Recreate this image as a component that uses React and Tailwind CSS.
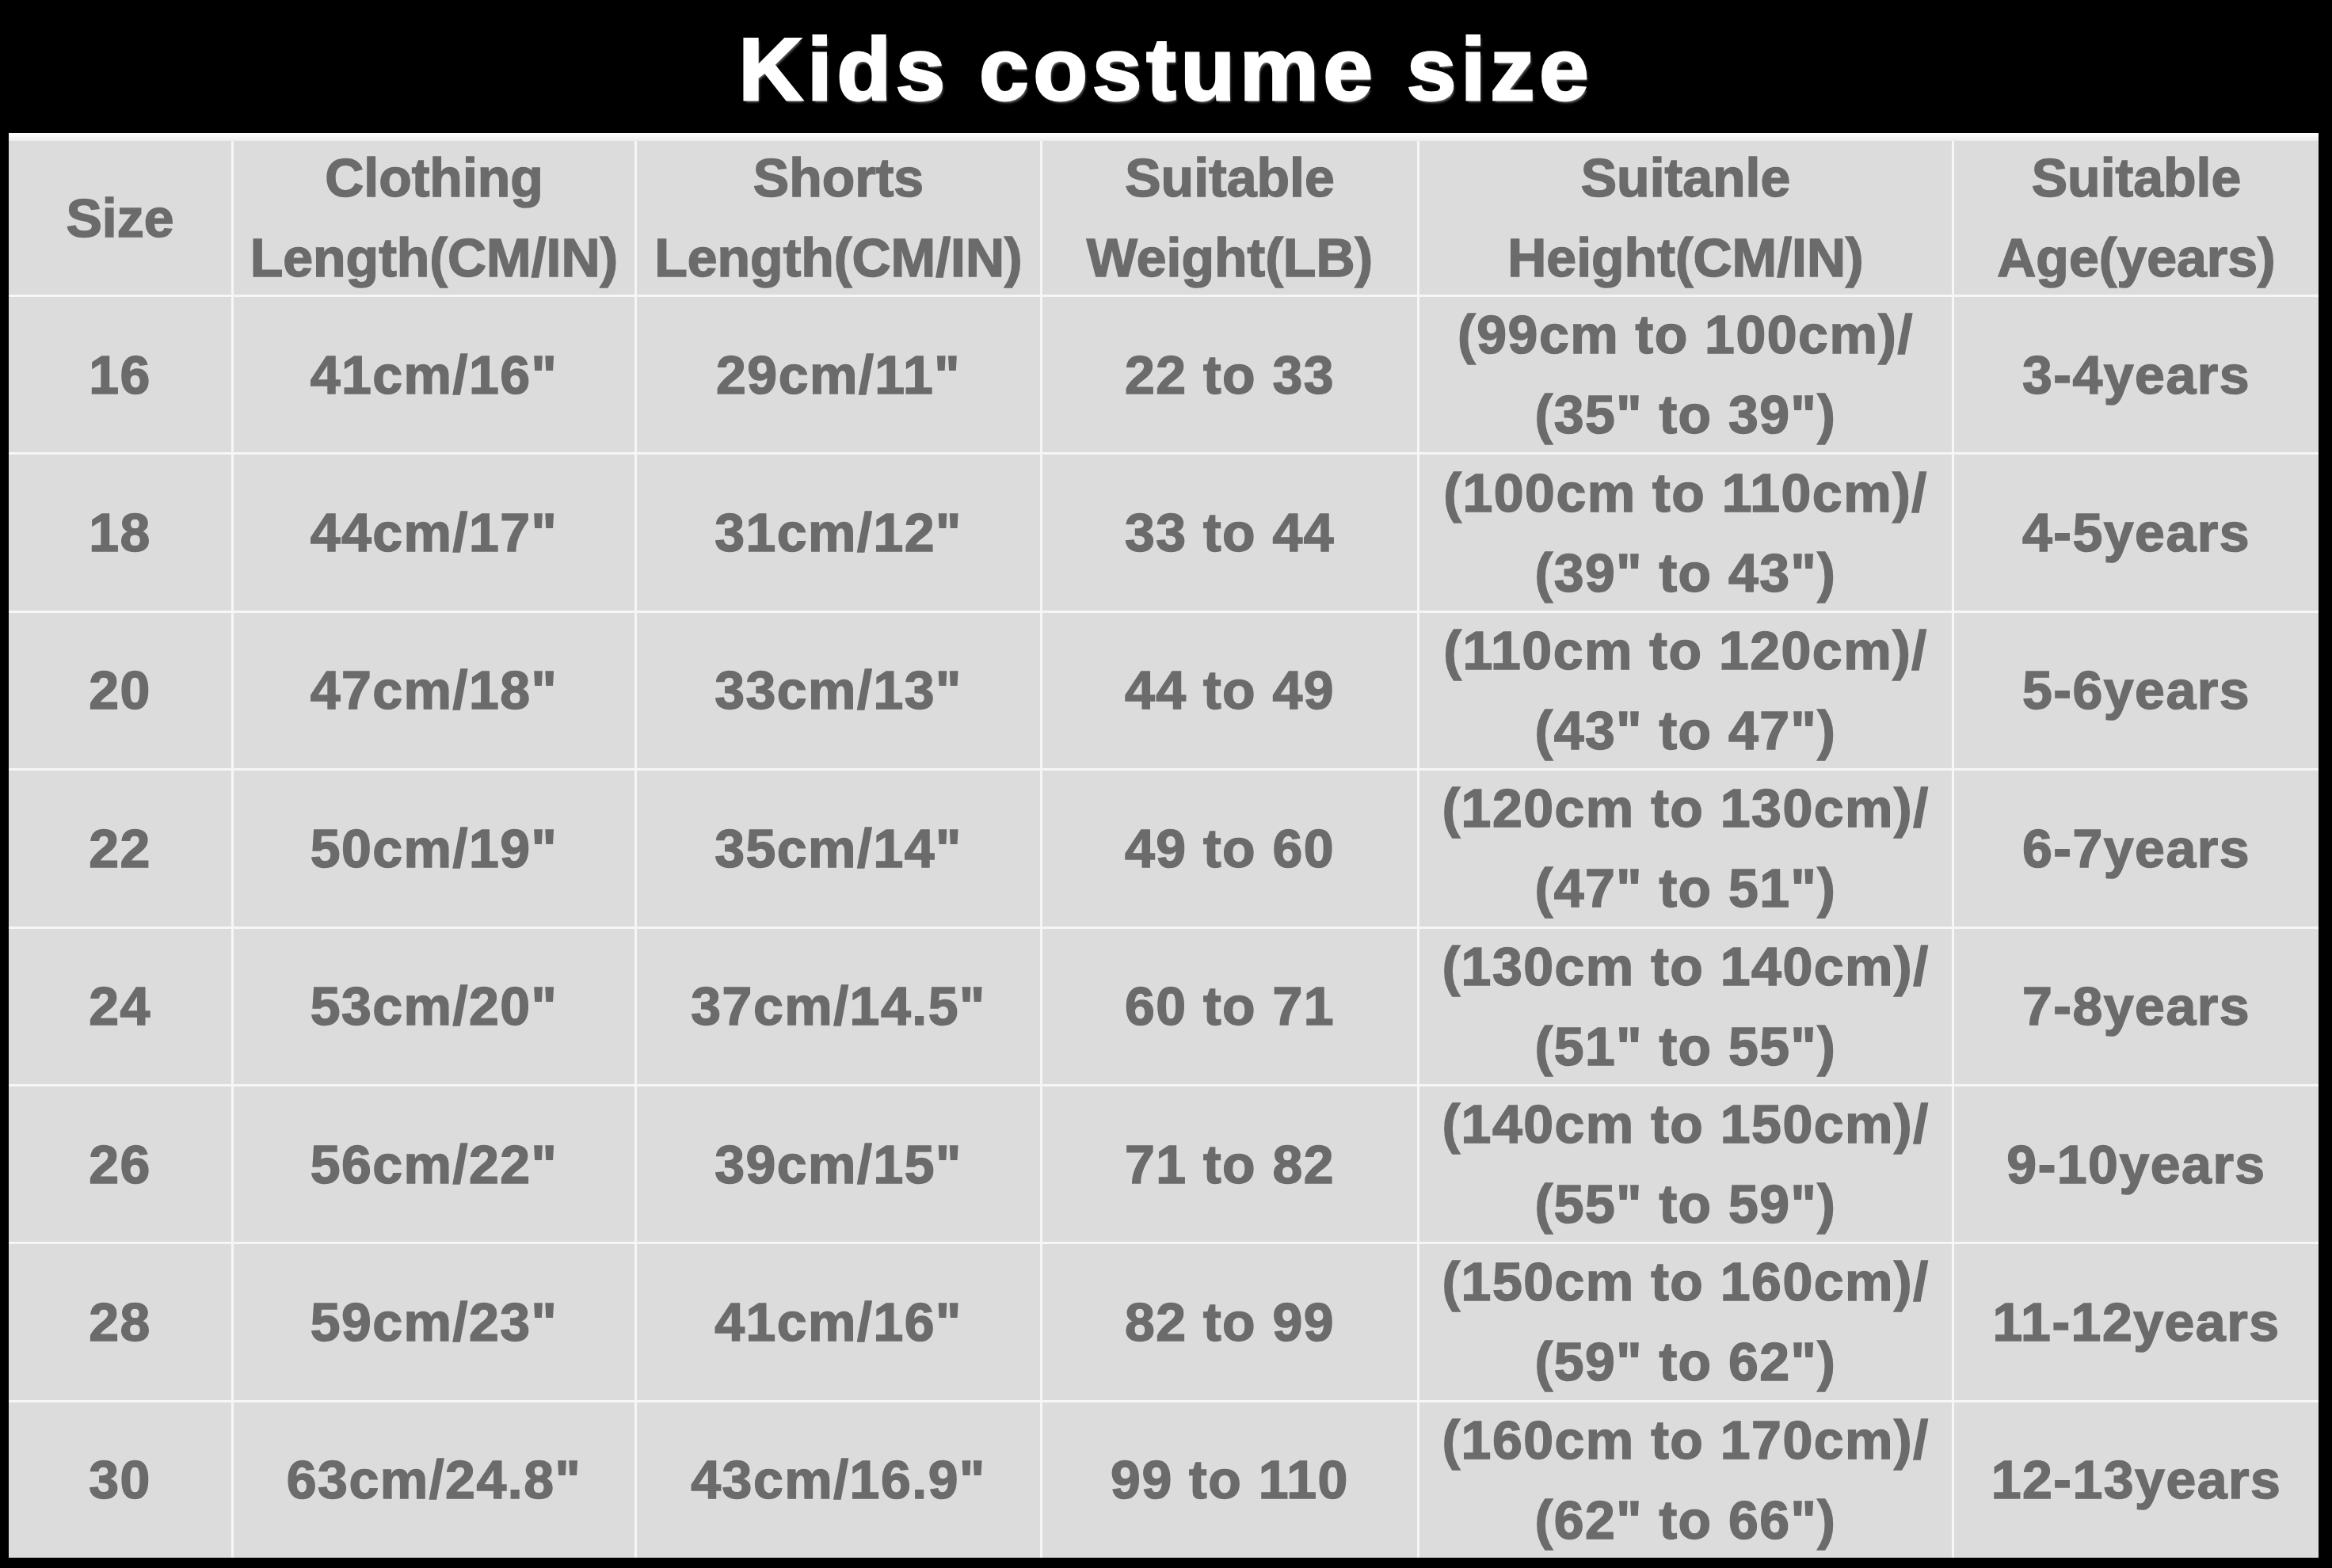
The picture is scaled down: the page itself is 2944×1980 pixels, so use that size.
const headers = [
  ["Size"],
  ["Clothing", "Length(CM/IN)"],
  ["Shorts", "Length(CM/IN)"],
  ["Suitable", "Weight(LB)"],
  ["Suitanle", "Height(CM/IN)"],
  ["Suitable", "Age(years)"],
];

const rows = [
  ["16", "41cm/16\"", "29cm/11\"", "22 to 33", ["(99cm to 100cm)/", "(35\" to 39\")"], "3-4years"],
  ["18", "44cm/17\"", "31cm/12\"", "33 to 44", ["(100cm to 110cm)/", "(39\" to 43\")"], "4-5years"],
  ["20", "47cm/18\"", "33cm/13\"", "44 to 49", ["(110cm to 120cm)/", "(43\" to 47\")"], "5-6years"],
  ["22", "50cm/19\"", "35cm/14\"", "49 to 60", ["(120cm to 130cm)/", "(47\" to 51\")"], "6-7years"],
  ["24", "53cm/20\"", "37cm/14.5\"", "60 to 71", ["(130cm to 140cm)/", "(51\" to 55\")"], "7-8years"],
  ["26", "56cm/22\"", "39cm/15\"", "71 to 82", ["(140cm to 150cm)/", "(55\" to 59\")"], "9-10years"],
  ["28", "59cm/23\"", "41cm/16\"", "82 to 99", ["(150cm to 160cm)/", "(59\" to 62\")"], "11-12years"],
  ["30", "63cm/24.8\"", "43cm/16.9\"", "99 to 110", ["(160cm to 170cm)/", "(62\" to 66\")"], "12-13years"],
];

function Cell({ lines, data }) {
  const list = Array.isArray(lines) ? lines : [lines];
  return (
    <div
      className={`bg-[#dcdcdc] min-h-0 flex flex-col items-center justify-center overflow-visible ${
        data ? "tracking-[1.5px]" : ""
      }`}
    >
      {list.map((l, i) => (
        <div key={i} className="h-[101px] shrink-0 leading-[101px] whitespace-nowrap">
          {l}
        </div>
      ))}
    </div>
  );
}

export default function App() {
  return (
    <div className="w-[2944px] h-[1980px] bg-black flex flex-col font-['Liberation_Sans',Arial,sans-serif]">
      <div className="h-[168px] shrink-0 flex items-center justify-center pt-[8px]">
        <h1 className="text-[112px] font-bold text-white tracking-[6px] leading-none [-webkit-text-stroke:3px_white] [text-shadow:2px_3px_3px_#666]">
          Kids costume size
        </h1>
      </div>
      <div className="ml-[11px] mr-[17px] mb-[13px] h-[1799px] shrink-0 flex flex-col">
        <div className="h-[10px] shrink-0 bg-linear-to-b from-white to-[#ececec]" />
        <div className="h-[1789px] grid grid-cols-[281px_506px_509px_473px_672px_460px] grid-rows-[194px_repeat(8,minmax(0,1fr))] gap-[3px] bg-[#f6f6f6] text-[68px] font-bold text-[#6b6b6b] [-webkit-text-stroke:1.5px_#6b6b6b]">
          {headers.map((h, i) => (
            <Cell key={"h" + i} lines={h} />
          ))}
          {rows.map((r, ri) =>
            r.map((c, ci) => <Cell key={ri + "-" + ci} lines={c} data />)
          )}
        </div>
      </div>
    </div>
  );
}
